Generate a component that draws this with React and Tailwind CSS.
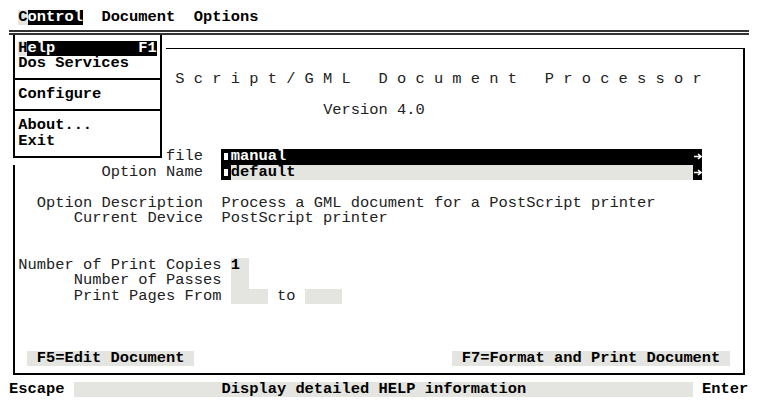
import React from 'react';

// text-mode screen: one cell is 9.24px wide, one row 15.5px high
const Row = ({ children, className = '' }) => (
  <div className={`flex h-[15.5px] whitespace-pre ${className}`}>{children}</div>
);

const Cursor = () => (
  <span className="flex w-[9.24px] h-full items-center justify-center bg-black">
    <span className="block w-[4px] h-[7px] bg-white" />
  </span>
);

const Arrow = () => (
  <span className="flex w-[9.24px] h-full items-center justify-end bg-black">
    <svg width="8" height="7" viewBox="0 0 8 7">
      <path d="M0 3.5H6.5M4 1l3 2.5L4 6" stroke="white" strokeWidth="1.6" fill="none" />
    </svg>
  </span>
);

const Label = ({ children }) => <span className="w-[184.8px] text-right">{children}</span>;
const LongLabel = ({ children }) => <span className="w-[203.28px] text-right">{children}</span>;

const ControlMenu = () => (
  <div className="absolute left-[9px] top-[34.5px] w-[157px] h-[130.5px] bg-white">
    <div className="ml-[3.62px] w-[149.84px] h-[123.25px] border-x-2 border-b-2 border-black pt-[6px] font-bold text-black">
      <Row className="pl-[3.62px]">
        <span className="bg-[#e4e5e1]">H</span>
        <span className="flex w-[129.36px] justify-between bg-black text-white">
          <span>elp</span>
          <span>F1</span>
        </span>
      </Row>
      <Row className="pl-[3.62px]">Dos Services</Row>
      <Row className="items-center">
        <div className="w-full h-[2px] bg-black" />
      </Row>
      <Row className="pl-[3.62px]">Configure</Row>
      <Row className="items-center">
        <div className="w-full h-[2px] bg-black" />
      </Row>
      <Row className="pl-[3.62px]">About...</Row>
      <Row className="pl-[3.62px]">Exit</Row>
    </div>
  </div>
);

export default function App() {
  return (
    <div className="relative w-[761px] h-[400px] overflow-hidden bg-white text-[#222] pt-[9.5px] pl-[9px] font-['Liberation_Mono',monospace] text-[15.4px] leading-[15.5px]">
      <Row className="font-bold text-black">
        <span> </span>
        <span className="bg-[#e4e5e1]">C</span>
        <span className="bg-black text-white">ontrol</span>
        <span>  Document  Options</span>
      </Row>

      <Row className="items-center">
        <div className="w-[740px] h-[5px] border-y-2 border-[#333]" />
      </Row>

      <div className="h-[341px] pt-[7.25px] pl-[3.62px]">
        <div className="w-[732px] h-[327px] border-2 border-t border-black pt-[7.25px] pl-[3.62px]">
          <Row />
          <Row>
            <span className="pl-[157.08px]">S c r i p t / G M L   D o c u m e n t   P r o c e s s o r</span>
          </Row>
          <Row />
          <Row>
            <span className="pl-[304.92px]">Version 4.0</span>
          </Row>
          <Row />
          <Row />
          <Row>
            <Label>file</Label>
            <span className="w-[18.48px]" />
            <span className="flex w-[480.48px] bg-black text-white font-bold">
              <Cursor />
              <span className="flex-1">manual</span>
              <Arrow />
            </span>
          </Row>
          <Row>
            <Label>Option Name</Label>
            <span className="w-[18.48px]" />
            <span className="flex w-[480.48px]">
              <Cursor />
              <span className="flex-1 bg-[#e4e5e1] font-bold text-black">default</span>
              <Arrow />
            </span>
          </Row>
          <Row />
          <Row>
            <Label>Option Description</Label>
            <span className="w-[18.48px]" />
            <span>Process a GML document for a PostScript printer</span>
          </Row>
          <Row>
            <Label>Current Device</Label>
            <span className="w-[18.48px]" />
            <span>PostScript printer</span>
          </Row>
          <Row />
          <Row />
          <Row>
            <LongLabel>Number of Print Copies</LongLabel>
            <span className="w-[9.24px]" />
            <span className="w-[18.48px] bg-[#e4e5e1] font-bold text-black">1</span>
          </Row>
          <Row>
            <LongLabel>Number of Passes</LongLabel>
            <span className="w-[9.24px]" />
            <span className="w-[18.48px] bg-[#e4e5e1]" />
          </Row>
          <Row>
            <LongLabel>Print Pages From</LongLabel>
            <span className="w-[9.24px]" />
            <span className="w-[36.96px] bg-[#e4e5e1]" />
            <span> to </span>
            <span className="w-[36.96px] bg-[#e4e5e1]" />
          </Row>
          <Row />
          <Row />
          <Row />
          <Row className="font-bold text-black">
            <span className="ml-[9.24px] w-[166.32px] bg-[#e4e5e1]"> F5=Edit Document</span>
            <span className="ml-[258.72px] w-[277.2px] bg-[#e4e5e1]"> F7=Format and Print Document</span>
          </Row>
        </div>
      </div>

      <Row className="font-bold text-black">
        <span className="w-[55.44px]">Escape</span>
        <span className="ml-[9.24px] w-[619.08px] bg-[#e4e5e1] pl-[147.84px]">Display detailed HELP information</span>
        <span className="ml-[9.24px]">Enter</span>
      </Row>

      <ControlMenu />
    </div>
  );
}
